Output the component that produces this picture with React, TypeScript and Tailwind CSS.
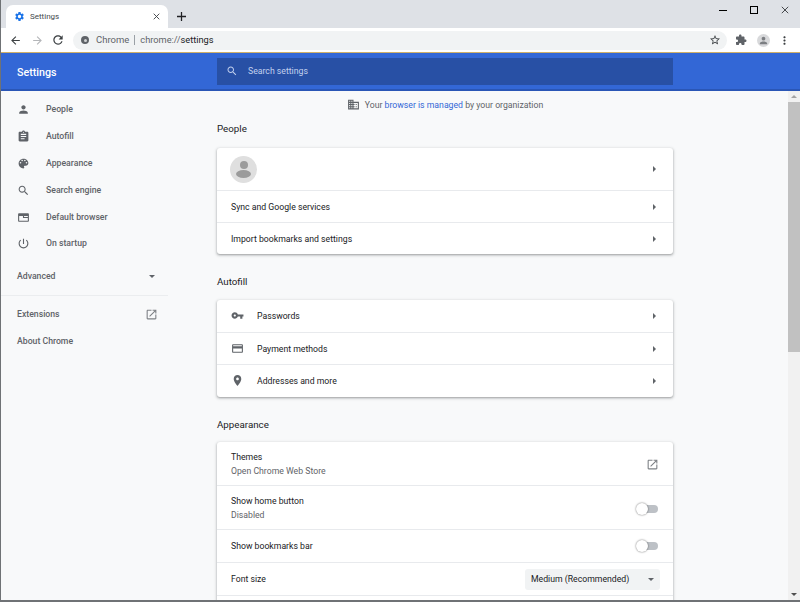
import React from 'react';

const paths = {
  person: 'M12 12c2.21 0 4-1.79 4-4s-1.79-4-4-4-4 1.79-4 4 1.79 4 4 4zm0 2c-2.67 0-8 1.34-8 4v2h16v-2c0-2.66-5.33-4-8-4z',
  assignment: 'M19 3h-4.18C14.4 1.84 13.3 1 12 1c-1.3 0-2.4.84-2.82 2H5c-1.1 0-2 .9-2 2v14c0 1.1.9 2 2 2h14c1.1 0 2-.9 2-2V5c0-1.1-.9-2-2-2zm-7 0c.55 0 1 .45 1 1s-.45 1-1 1-1-.45-1-1 .45-1 1-1zm2 14H7v-2h7v2zm3-4H7v-2h10v2zm0-4H7V7h10v2z',
  palette: 'M12 3c-4.97 0-9 4.03-9 9s4.03 9 9 9c.83 0 1.5-.67 1.5-1.5 0-.39-.15-.74-.39-1.01-.23-.26-.38-.61-.38-.99 0-.83.67-1.5 1.5-1.5H16c2.76 0 5-2.24 5-5 0-4.42-4.03-8-9-8zm-5.5 9c-.83 0-1.5-.67-1.5-1.5S5.67 9 6.5 9 8 9.67 8 10.5 7.33 12 6.5 12zm3-4C8.67 8 8 7.33 8 6.5S8.67 5 9.5 5s1.5.67 1.5 1.5S10.33 8 9.5 8zm5 0c-.83 0-1.5-.67-1.5-1.5S13.67 5 14.5 5s1.5.67 1.5 1.5S15.33 8 14.5 8zm3 4c-.83 0-1.5-.67-1.5-1.5S16.67 9 17.5 9s1.5.67 1.5 1.5-.67 1.5-1.5 1.5z',
  search: 'M15.5 14h-.79l-.28-.27C15.41 12.59 16 11.11 16 9.5 16 5.91 13.09 3 9.5 3S3 5.91 3 9.5 5.91 16 9.5 16c1.61 0 3.09-.59 4.23-1.57l.27.28v.79l5 4.99L20.49 19l-4.99-5zm-6 0C7.01 14 5 11.99 5 9.5S7.01 5 9.5 5 14 7.01 14 9.5 11.99 14 9.5 14z',
  browser: 'M20 4H4c-1.1 0-2 .9-2 2v12c0 1.1.9 2 2 2h16c1.1 0 2-.9 2-2V6c0-1.1-.9-2-2-2zM4 18V9h7v4h9v5H4zm16-7h-7V9h7v2z',
  power: 'M13 3h-2v10h2V3zm4.83 2.17l-1.42 1.42C17.99 7.86 19 9.81 19 12c0 3.87-3.13 7-7 7s-7-3.13-7-7c0-2.19 1.01-4.14 2.58-5.42L6.17 5.17C4.23 6.82 3 9.26 3 12c0 4.97 4.03 9 9 9s9-4.03 9-9c0-2.74-1.23-5.18-3.17-6.83z',
  open: 'M19 19H5V5h7V3H5c-1.11 0-2 .9-2 2v14c0 1.1.89 2 2 2h14c1.1 0 2-.9 2-2v-7h-2v7zM14 3v2h3.59l-9.83 9.83 1.41 1.41L19 6.41V10h2V3h-7z',
  key: 'M12.65 10C11.83 7.67 9.61 6 7 6c-3.31 0-6 2.69-6 6s2.69 6 6 6c2.61 0 4.83-1.67 5.65-4H17v4h4v-4h2v-4H12.65zM7 14c-1.1 0-2-.9-2-2s.9-2 2-2 2 .9 2 2-.9 2-2 2z',
  card: 'M20 4H4c-1.11 0-1.99.89-1.99 2L2 18c0 1.11.89 2 2 2h16c1.11 0 2-.89 2-2V6c0-1.11-.89-2-2-2zm0 14H4v-6h16v6zm0-10H4V6h16v2z',
  place: 'M12 2C8.13 2 5 5.13 5 9c0 5.25 7 13 7 13s7-7.75 7-13c0-3.87-3.13-7-7-7zm0 9.5c-1.38 0-2.5-1.12-2.5-2.5s1.12-2.5 2.5-2.5 2.5 1.12 2.5 2.5-1.12 2.5-2.5 2.5z',
  domain: 'M12 7V3H2v18h20V7H12zM6 19H4v-2h2v2zm0-4H4v-2h2v2zm0-4H4V9h2v2zm0-4H4V5h2v2zm4 12H8v-2h2v2zm0-4H8v-2h2v2zm0-4H8V9h2v2zm0-4H8V5h2v2zm10 12h-8v-2h2v-2h-2v-2h2v-2h-2V9h8v10zm-2-8h-2v2h2v-2zm0 4h-2v2h2v-2z',
  gear: 'M19.14 12.94c.04-.3.06-.61.06-.94 0-.32-.02-.64-.07-.94l2.03-1.58c.18-.14.23-.41.12-.61l-1.92-3.32c-.12-.22-.37-.29-.59-.22l-2.39.96c-.5-.38-1.03-.7-1.62-.94l-.36-2.54c-.04-.24-.24-.41-.48-.41h-3.84c-.24 0-.43.17-.47.41l-.36 2.54c-.59.24-1.13.57-1.62.94l-2.39-.96c-.22-.08-.47 0-.59.22L2.74 8.87c-.12.21-.08.47.12.61l2.03 1.58c-.05.3-.09.63-.09.94s.02.64.07.94l-2.03 1.58c-.18.14-.23.41-.12.61l1.92 3.32c.12.22.37.29.59.22l2.39-.96c.5.38 1.03.7 1.62.94l.36 2.54c.05.24.24.41.48.41h3.84c.24 0 .44-.17.47-.41l.36-2.54c.59-.24 1.13-.56 1.62-.94l2.39.96c.22.08.47 0 .59-.22l1.92-3.32c.12-.22.07-.47-.12-.61l-2.01-1.58zM12 15.6c-1.98 0-3.6-1.62-3.6-3.6s1.62-3.6 3.6-3.6 3.6 1.62 3.6 3.6-1.62 3.6-3.6 3.6z',
  extension: 'M20.5 11H19V7c0-1.1-.9-2-2-2h-4V3.5C13 2.12 11.88 1 10.5 1S8 2.12 8 3.5V5H4c-1.1 0-1.99.9-1.99 2v3.8H3.5c1.49 0 2.7 1.21 2.7 2.7s-1.21 2.7-2.7 2.7H2V20c0 1.1.9 2 2 2h3.8v-1.5c0-1.49 1.21-2.7 2.7-2.7 1.49 0 2.7 1.21 2.7 2.7V22H17c1.1 0 2-.9 2-2v-4h1.5c1.38 0 2.5-1.12 2.5-2.5S21.88 11 20.5 11z',
  star: 'M22 9.24l-7.19-.62L12 2 9.19 8.63 2 9.24l5.46 4.73L5.82 21 12 17.27 18.18 21l-1.63-7.03L22 9.24zM12 15.4l-3.76 2.27 1-4.28-3.32-2.88 4.38-.38L12 6.1l1.71 4.04 4.38.38-3.32 2.88 1 4.28L12 15.4z',
  back: 'M20 11H7.83l5.59-5.59L12 4l-8 8 8 8 1.41-1.41L7.83 13H20v-2z',
  forward: 'M12 4l-1.41 1.41L16.17 11H4v2h12.17l-5.58 5.59L12 20l8-8z',
  reload: 'M17.65 6.35C16.2 4.9 14.21 4 12 4c-4.42 0-7.99 3.58-7.99 8s3.57 8 7.99 8c3.73 0 6.84-2.55 7.73-6h-2.08c-.82 2.33-3.04 4-5.65 4-3.31 0-6-2.69-6-6s2.69-6 6-6c1.66 0 3.14.69 4.22 1.78L13 11h7V4l-2.35 2.35z',
  dots: 'M12 8c1.1 0 2-.9 2-2s-.9-2-2-2-2 .9-2 2 .9 2 2 2zm0 2c-1.1 0-2 .9-2 2s.9 2 2 2 2-.9 2-2-.9-2-2-2zm0 6c-1.1 0-2 .9-2 2s.9 2 2 2 2-.9 2-2-.9-2-2-2z',
};

function Icon({ d, className }: { d: string; className: string }) {
  return (
    <svg viewBox="0 0 24 24" className={className} fill="currentColor">
      <path d={d} />
    </svg>
  );
}

function Arrow() {
  return <div className="w-0 h-0 border-y-[3px] border-y-transparent border-l-[3px] border-l-[#5f6368]" />;
}

function Caret() {
  return <div className="w-0 h-0 border-x-[3.5px] border-x-transparent border-t-[3px] border-t-[#5f6368]" />;
}

function Toggle() {
  return (
    <div className="relative w-[21px] h-[8px] rounded-full bg-[#bdc1c6]">
      <div className="absolute -left-[1px] -top-[2px] w-[12px] h-[12px] rounded-full bg-white shadow-[0_0_2px_rgba(0,0,0,0.6)]" />
    </div>
  );
}

function NavItem({ d, label }: { d: string; label: string }) {
  return (
    <div className="flex items-center h-[26.8px] pl-[16px] text-[#5f6368]">
      <Icon d={d} className="w-[13px] h-[13px] text-[#5f6368]" />
      <span className="ml-[16px]">{label}</span>
    </div>
  );
}

function LinkRow({ label, d, h, last }: { label: string; d?: string; h: string; last?: boolean }) {
  return (
    <div className={`flex items-center justify-between pl-[14px] pr-[17px] ${h} ${last ? '' : 'border-b border-[#e8eaed]'}`}>
      <div className="flex items-center text-[#202124]">
        {d && <Icon d={d} className="w-[13px] h-[13px] mr-[13px] text-[#5f6368]" />}
        <span className="mt-[2px]">{label}</span>
      </div>
      <Arrow />
    </div>
  );
}

const cardClass = 'w-[456px] bg-white rounded-[3px] shadow-[0_1px_2px_rgba(60,64,67,0.35),0_1px_3px_1px_rgba(60,64,67,0.15)]';

export default function App() {
  return (
    <div className="w-[800px] h-[602px] overflow-hidden flex flex-col bg-[#f8f9fa] text-[8.7px] border-l border-b-2 border-[#6f7275] font-['Roboto',sans-serif]">
      {/* tab strip */}
      <div className="h-[28px] shrink-0 bg-[#dee1e6] flex items-end relative">
        <div className="ml-[5px] w-[162px] h-[23px] bg-white rounded-t-[7px] flex items-center pl-[8px] pr-[8px]">
          <Icon d={paths.gear} className="w-[11px] h-[11px] text-[#1a73e8]" />
          <span className="ml-[5px] text-[8px] text-[#45494d]">Settings</span>
          <svg viewBox="0 0 10 10" className="w-[7px] h-[7px] ml-auto text-[#3c4043]" stroke="currentColor" strokeWidth="1.3">
            <path d="M1 1l8 8M9 1l-8 8" />
          </svg>
        </div>
        <svg viewBox="0 0 10 10" className="w-[9px] h-[9px] ml-[9px] mb-[7px] text-[#202124]" stroke="currentColor" strokeWidth="1.4">
          <path d="M5 0v10M0 5h10" />
        </svg>
        <div className="ml-auto flex items-center gap-[23px] mr-[11px] mb-[14px]">
          <div className="w-[8px] h-[1px] bg-black" />
          <div className="w-[8px] h-[8px] border border-black" />
          <svg viewBox="0 0 10 10" className="w-[8px] h-[8px] text-[#202124]" stroke="currentColor" strokeWidth="1">
            <path d="M1 1l8 8M9 1l-8 8" />
          </svg>
        </div>
      </div>

      {/* toolbar */}
      <div className="h-[25px] shrink-0 bg-white flex items-center pl-[8px] pr-[8px] border-b border-[#d0b06a]">
        <Icon d={paths.back} className="w-[13px] h-[13px] text-[#3c4043]" />
        <Icon d={paths.forward} className="w-[13px] h-[13px] ml-[9px] text-[#b4b6b9]" />
        <Icon d={paths.reload} className="w-[14px] h-[14px] ml-[7px] text-[#3c4043]" />
        <div className="ml-[8px] w-[654px] h-[19px] rounded-full bg-[#f1f3f4] flex items-center pl-[8px] pr-[6px] text-[9.5px]">
          <div className="w-[8px] h-[8px] rounded-full bg-[#5f6368] border-[2px] border-[#5f6368] flex items-center justify-center">
            <div className="w-[3px] h-[3px] rounded-full bg-[#d0d2d4]" />
          </div>
          <span className="ml-[7px] text-[#5f6368]">Chrome</span>
          <div className="w-px h-[10px] bg-[#9aa0a6] mx-[5px]" />
          <span className="text-[#5f6368] text-[9.25px]">
            chrome://<span className="text-[#202124]">settings</span>
          </span>
          <Icon d={paths.star} className="w-[12px] h-[12px] ml-auto text-[#3c4043]" />
        </div>
        <Icon d={paths.extension} className="w-[12px] h-[12px] ml-[8px] text-[#5f6368]" />
        <div className="ml-[10px] w-[13px] h-[13px] rounded-full bg-[#d8d9db] flex items-center justify-center">
          <Icon d={paths.person} className="w-[11px] h-[11px] text-[#7b7e82]" />
        </div>
        <Icon d={paths.dots} className="w-[13px] h-[13px] ml-[8px] text-[#3c4043]" />
      </div>

      {/* blue header */}
      <div className="h-[38px] shrink-0 bg-[#3367d6] border-b-2 border-[#2a56b6] flex items-center">
        <div className="w-[216px] pl-[16px] pt-[5px] text-white font-medium text-[10.7px]">Settings</div>
        <div className="w-[456px] h-[27px] bg-[#2850a5] flex items-center pl-[9px] text-[#c2d0ee]">
          <Icon d={paths.search} className="w-[12px] h-[12px]" />
          <span className="ml-[10px] mt-[2px]">Search settings</span>
        </div>
      </div>

      {/* body */}
      <div className="flex-1 min-h-0 flex">
        <div className="w-[167px] shrink-0 pt-[5.5px] font-medium">
          <NavItem d={paths.person} label="People" />
          <NavItem d={paths.assignment} label="Autofill" />
          <NavItem d={paths.palette} label="Appearance" />
          <NavItem d={paths.search} label="Search engine" />
          <NavItem d={paths.browser} label="Default browser" />
          <NavItem d={paths.power} label="On startup" />
          <div className="mt-[5.5px] h-[27px] flex items-center justify-between pl-[16px] pr-[13px] text-[#5f6368]">
            <span>Advanced</span>
            <Caret />
          </div>
          <div className="mt-[5px] border-t border-[#ebedef] h-[6px]" />
          <div className="h-[27px] flex items-center justify-between pl-[16px] pr-[10px] text-[#5f6368]">
            <span>Extensions</span>
            <Icon d={paths.open} className="w-[13px] h-[13px] text-[#7d8185]" />
          </div>
          <div className="h-[27px] flex items-center pl-[16px] text-[#5f6368]">About Chrome</div>
        </div>

        <div className="w-[49px] shrink-0" />

        <div className="w-[456px] shrink-0">
          <div className="h-[27px] flex items-center justify-center text-[#5f6368]">
            <Icon d={paths.domain} className="w-[13px] h-[13px] mr-[5px] text-[#5f6368]" />
            <span className="mt-[2px]">
              Your <span className="text-[#3367d6]">browser is managed</span> by your organization
            </span>
          </div>

          <div className="h-[30px] pt-[4px] text-[#202124] text-[9.75px]">People</div>
          <div className={cardClass}>
            <div className="h-[43px] flex items-center justify-between pl-[13px] pr-[17px] border-b border-[#e8eaed]">
              <div className="w-[27px] h-[27px] rounded-full bg-[#dfdfdf] flex flex-col items-center justify-center gap-[1px]">
                <div className="w-[8px] h-[8px] rounded-full bg-[#9b9b9b]" />
                <div className="w-[15px] h-[8px] rounded-[50%] bg-[#9b9b9b]" />
              </div>
              <Arrow />
            </div>
            <LinkRow label="Sync and Google services" h="h-[32px]" />
            <LinkRow label="Import bookmarks and settings" h="h-[31px]" last />
          </div>

          <div className="h-[46px] pt-[21px] text-[#202124] text-[9.75px]">Autofill</div>
          <div className={cardClass}>
            <LinkRow label="Passwords" d={paths.key} h="h-[33px]" />
            <LinkRow label="Payment methods" d={paths.card} h="h-[32px]" />
            <LinkRow label="Addresses and more" d={paths.place} h="h-[32px]" last />
          </div>

          <div className="h-[45px] pt-[21px] text-[#202124] text-[9.75px]">Appearance</div>
          <div className={cardClass}>
            <div className="h-[44px] flex items-center justify-between pt-[2px] pl-[14px] pr-[14px] border-b border-[#e8eaed]">
              <div>
                <div className="text-[#202124]">Themes</div>
                <div className="text-[#5f6368] mt-[1px]">Open Chrome Web Store</div>
              </div>
              <Icon d={paths.open} className="w-[13px] h-[13px] text-[#7d8185]" />
            </div>
            <div className="h-[44px] flex items-center justify-between pt-[2px] pl-[14px] pr-[15px] border-b border-[#e8eaed]">
              <div>
                <div className="text-[#202124]">Show home button</div>
                <div className="text-[#5f6368] mt-[1px]">Disabled</div>
              </div>
              <Toggle />
            </div>
            <div className="h-[33px] flex items-center justify-between pl-[14px] pr-[15px] border-b border-[#e8eaed]">
              <span className="text-[#202124] mt-[2px]">Show bookmarks bar</span>
              <Toggle />
            </div>
            <div className="h-[33px] flex items-center justify-between pl-[14px] pr-[13px] border-b border-[#e8eaed]">
              <span className="text-[#202124] mt-[2px]">Font size</span>
              <div className="w-[135px] h-[21px] rounded-[3px] bg-[#f1f3f4] flex items-center justify-between pl-[6px] pr-[6px] text-[#202124]">
                <span className="mt-[2px]">Medium (Recommended)</span>
                <Caret />
              </div>
            </div>
            <div className="h-[20px]" />
          </div>
        </div>

        <div className="ml-auto w-[12px] shrink-0 bg-[#f1f1f1] flex flex-col items-center">
          <div className="h-[11px] flex items-center justify-center">
            <div className="w-0 h-0 border-x-[3px] border-x-transparent border-b-[3px] border-b-[#a3a3a3]" />
          </div>
          <div className="w-full h-[250px] bg-[#c1c1c1]" />
          <div className="mt-auto h-[11px] flex items-center justify-center">
            <div className="w-0 h-0 border-x-[3px] border-x-transparent border-t-[3px] border-t-[#505050]" />
          </div>
        </div>
      </div>
    </div>
  );
}
